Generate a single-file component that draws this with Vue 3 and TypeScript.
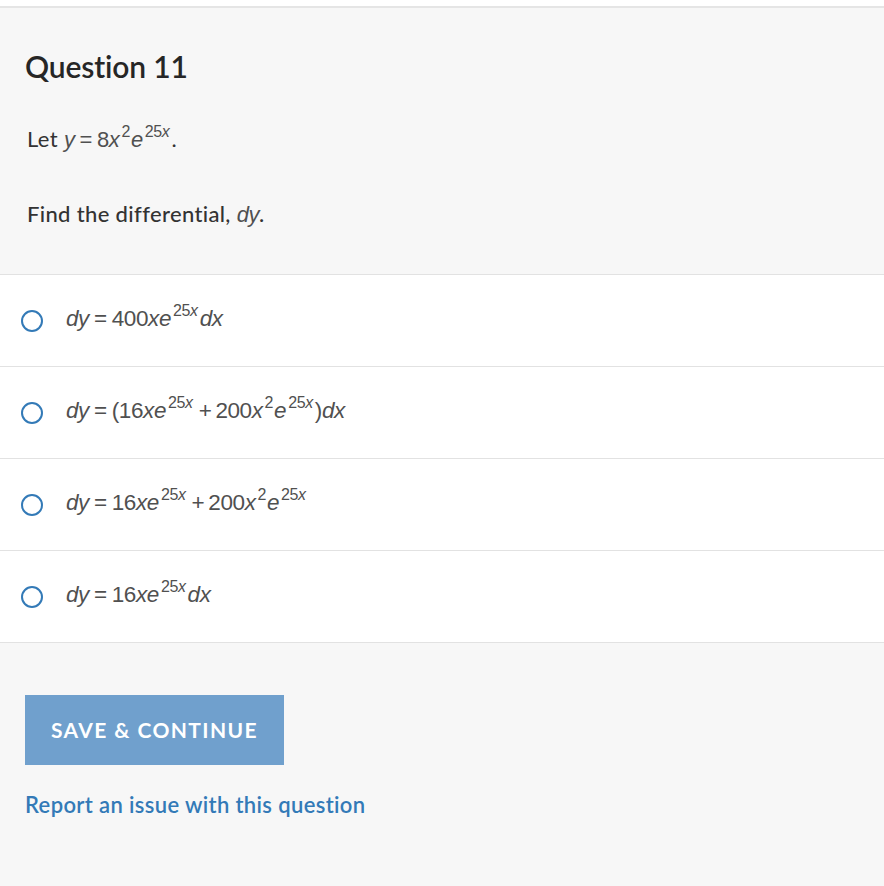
<template>
  <div class="page">
    <section class="question">
      <h2 class="title">Question 11</h2>
      <p class="stem">Let <span class="math"><i>y</i><span class="eq">=</span>8<i>x</i><sup class="sq">2</sup><i>e</i><sup class="exp">25<i>x</i></sup></span>.</p>
      <p class="ask">Find the differential, <span class="math"><i>dy</i></span>.</p>
    </section>

    <ul class="options">
      <li v-for="opt in options" :key="opt.id" class="option">
        <span class="radio"></span>
        <span class="math answer" v-html="opt.html"></span>
      </li>
    </ul>

    <footer class="actions">
      <button class="save" type="button">SAVE &amp; CONTINUE</button>
      <a class="report" href="#">Report an issue with this question</a>
    </footer>
  </div>
</template>

<script setup lang="ts">
interface Option {
  id: number
  html: string
}

const exp = '<sup class="exp">25<i>x</i></sup>'
const sq = '<sup class="sq">2</sup>'
const eq = '<span class="eq">=</span>'
const plus = '<span class="plus">+</span>'

const options: Option[] = [
  { id: 1, html: `<i>dy</i>${eq}400<i>xe</i>${exp}<i>dx</i>` },
  { id: 2, html: `<i>dy</i>${eq}(16<i>xe</i>${exp}${plus}200<i>x</i>${sq}<i>e</i>${exp})<i>dx</i>` },
  { id: 3, html: `<i>dy</i>${eq}16<i>xe</i>${exp}${plus}200<i>x</i>${sq}<i>e</i>${exp}` },
  { id: 4, html: `<i>dy</i>${eq}16<i>xe</i>${exp}<i>dx</i>` }
]
</script>

<style>
html,
body {
  margin: 0;
  background: #ffffff;
}

.math {
  font-family: "Liberation Sans", Arial, sans-serif;
  color: #505050;
}

.math i {
  font-style: italic;
}

.math .eq {
  margin: 0 5px;
}

.math .plus {
  margin: 0 4px;
}

.math .exp,
.math .sq {
  font-size: 16px;
  line-height: 0;
  vertical-align: 10px;
}

.math .exp {
  margin-left: 2px;
  margin-right: 2px;
}

.math .sq {
  margin-left: 2px;
  margin-right: 1px;
}
</style>

<style scoped>
.page {
  height: 886px;
  overflow: hidden;
  box-sizing: border-box;
  padding-top: 6px;
  font-family: Lato, "Open Sans", sans-serif;
}

.question {
  height: 268px;
  box-sizing: border-box;
  padding: 40px 25px 0;
  background: #f7f7f7;
  border-top: 2px solid #e5e5e5;
}

.title {
  margin: 0;
  font-size: 30px;
  line-height: 36px;
  font-weight: 600;
  letter-spacing: -0.15px;
  color: #262626;
}

.stem,
.ask {
  margin: 0;
  padding-left: 2px;
  font-size: 22px;
  line-height: 28px;
  letter-spacing: 0.35px;
  color: #333333;
}

.stem {
  margin-top: 41px;
}

.stem .math,
.ask .math {
  letter-spacing: -0.4px;
}

.ask {
  margin-top: 46px;
  font-weight: 500;
}

.options {
  list-style: none;
  margin: 0;
  padding: 0;
  background: #ffffff;
  border-top: 1px solid #e2e2e2;
}

.option {
  display: flex;
  align-items: center;
  height: 91px;
  padding-left: 21px;
  border-bottom: 1px solid #e2e2e2;
}

.radio {
  width: 22px;
  height: 22px;
  box-sizing: border-box;
  border: 2.5px solid #337ab7;
  border-radius: 50%;
  flex: none;
}

.answer {
  margin-left: 23px;
  margin-bottom: 4px;
  font-size: 22.5px;
  line-height: 28px;
  letter-spacing: -0.4px;
}

.actions {
  display: flex;
  flex-direction: column;
  align-items: flex-start;
  height: 243px;
  box-sizing: border-box;
  padding: 52px 25px 0;
  background: #f7f7f7;
}

.save {
  width: 259px;
  height: 70px;
  padding: 0 0 2px;
  border: 0;
  background: #70a0cd;
  color: #ffffff;
  font-family: Lato, "Open Sans", sans-serif;
  font-size: 21px;
  font-weight: 700;
  letter-spacing: 1.4px;
}

.report {
  margin-top: 26px;
  font-size: 22px;
  line-height: 28px;
  font-weight: 600;
  letter-spacing: 0.36px;
  color: #337ab7;
  text-decoration: none;
}
</style>
